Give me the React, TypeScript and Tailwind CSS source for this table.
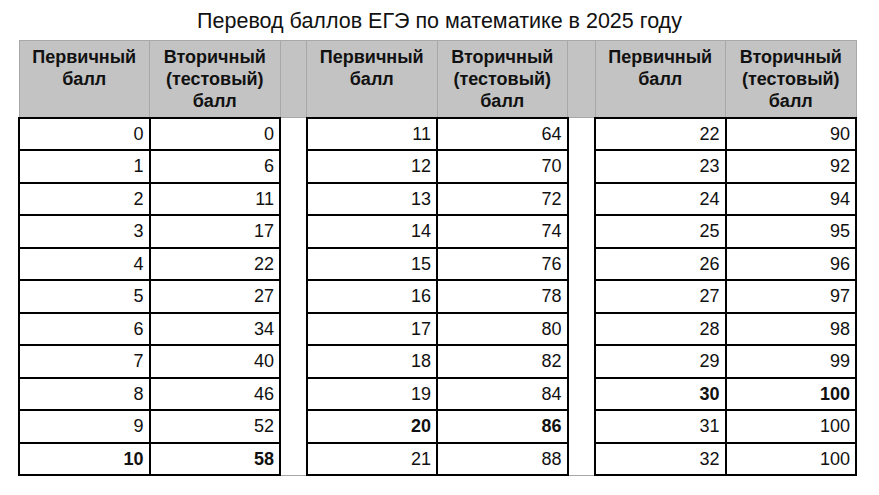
const columns: number[][][] = [
  [
    [0, 0], [1, 6], [2, 11], [3, 17], [4, 22], [5, 27],
    [6, 34], [7, 40], [8, 46], [9, 52], [10, 58],
  ],
  [
    [11, 64], [12, 70], [13, 72], [14, 74], [15, 76], [16, 78],
    [17, 80], [18, 82], [19, 84], [20, 86], [21, 88],
  ],
  [
    [22, 90], [23, 92], [24, 94], [25, 95], [26, 96], [27, 97],
    [28, 98], [29, 99], [30, 100], [31, 100], [32, 100],
  ],
];

// primary scores shown in bold
const bold = new Set([10, 20, 30]);

function HeaderCells() {
  return (
    <>
      <th className="w-[130.5px] border border-[#a8a8a8] bg-[#c3c3c3] px-0 pt-[5px] align-top text-[18px] font-bold leading-[22px]">
        Первичный
        <br />
        балл
      </th>
      <th className="w-[130.5px] border border-[#a8a8a8] bg-[#c3c3c3] px-0 pt-[5px] align-top text-[18px] font-bold leading-[22px]">
        Вторичный
        <br />
        (тестовый)
        <br />
        балл
      </th>
    </>
  );
}

export default function App() {
  const rows = columns[0].map((_, i) => i);

  return (
    <div className="min-h-screen bg-white text-[#111] [font-family:'Liberation_Sans',Arial,sans-serif]">
      <div className="h-[40px] pt-[8px] text-center text-[21.5px] leading-[26px]">
        Перевод баллов ЕГЭ по математике в 2025 году
      </div>
      <table className="ml-[18px] table-fixed border-collapse">
        <thead>
          <tr className="h-[77px]">
            <HeaderCells />
            <th className="w-[26.5px] border border-[#a8a8a8] bg-[#c3c3c3]" />
            <HeaderCells />
            <th className="w-[27.5px] border border-[#a8a8a8] bg-[#c3c3c3]" />
            <HeaderCells />
          </tr>
        </thead>
        <tbody>
          {rows.map((i) => (
            <tr key={i} className="h-[32.5px]">
              {columns.map((col, c) => {
                const [p, s] = col[i];
                const weight = bold.has(p) ? 'font-bold' : 'font-normal';
                return (
                  <>
                    {c > 0 && (
                      <td
                        key={`gap-${c}`}
                        className={
                          i === rows.length - 1
                            ? 'border-b border-[#a8a8a8]'
                            : ''
                        }
                      />
                    )}
                    <td
                      key={`p-${c}`}
                      className={`border-2 border-black pr-[5px] text-right text-[18px] leading-none ${weight}`}
                    >
                      {p}
                    </td>
                    <td
                      key={`s-${c}`}
                      className={`border-2 border-black pr-[5px] text-right text-[18px] leading-none ${weight}`}
                    >
                      {s}
                    </td>
                  </>
                );
              })}
            </tr>
          ))}
        </tbody>
      </table>
    </div>
  );
}
